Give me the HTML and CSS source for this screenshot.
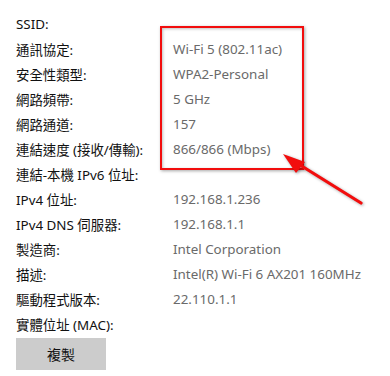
FILE: index.html
```html
<!DOCTYPE html>
<html lang="zh-Hant">
<head>
<meta charset="utf-8">
<link rel="stylesheet" href="styles.css">
</head>
<body>
<div class="panel">
  <dl class="props">
    <dt>SSID:</dt><dd></dd>
    <dt>通訊協定:</dt><dd>Wi-Fi 5 (802.11ac)</dd>
    <dt>安全性類型:</dt><dd>WPA2-Personal</dd>
    <dt>網路頻帶:</dt><dd>5 GHz</dd>
    <dt>網路通道:</dt><dd>157</dd>
    <dt>連結速度 (接收/傳輸):</dt><dd>866/866 (Mbps)</dd>
    <dt>連結-本機 IPv6 位址:</dt><dd></dd>
    <dt>IPv4 位址:</dt><dd>192.168.1.236</dd>
    <dt>IPv4 DNS 伺服器:</dt><dd>192.168.1.1</dd>
    <dt>製造商:</dt><dd>Intel Corporation</dd>
    <dt>描述:</dt><dd>Intel(R) Wi-Fi 6 AX201 160MHz</dd>
    <dt>驅動程式版本:</dt><dd>22.110.1.1</dd>
    <dt>實體位址 (MAC):</dt><dd></dd>
  </dl>
  <button class="copy">複製</button>
  <div class="highlight"></div>
  <svg class="arrow" width="390" height="376" viewBox="0 0 390 376">
    <line x1="361" y1="203" x2="292" y2="160" stroke="#f20d0d" stroke-width="3.2" stroke-linecap="round"/>
    <polygon points="283,154 305,162 296,173" fill="#f20d0d"/>
  </svg>
</div>
</body>
</html>
```
FILE: styles.css
```css
html, body {
  margin: 0;
  padding: 0;
  background: #fff;
}
.panel {
  position: relative;
  width: 390px;
  height: 376px;
  padding: 11px 0 0 16px;
  box-sizing: border-box;
  font-family: "Noto Sans", "Noto Sans CJK TC", sans-serif;
  font-size: 13.4px;
}
.props {
  display: grid;
  grid-template-columns: 157px 1fr;
  grid-auto-rows: 25px;
  margin: 0;
  align-items: center;
}
.props dt {
  color: #111;
  white-space: nowrap;
}
.props dd {
  margin: 0;
  color: #6a6a6a;
  white-space: nowrap;
}
.copy {
  display: block;
  margin-top: 2px;
  width: 90px;
  height: 32px;
  border: none;
  background: #cccccc;
  color: #111;
  font-family: "Noto Sans CJK TC", sans-serif;
  font-size: 14px;
  padding: 0;
}
.highlight {
  position: absolute;
  left: 160px;
  top: 26px;
  width: 140px;
  height: 140px;
  border: 2px solid #f20d0d;
  box-shadow: 1px 1px 3px rgba(0,0,0,0.35), inset 1px 1px 3px rgba(0,0,0,0.25);
}
.arrow {
  position: absolute;
  left: 0;
  top: 0;
  filter: drop-shadow(1px 1px 1.5px rgba(0,0,0,0.35));
}
```
